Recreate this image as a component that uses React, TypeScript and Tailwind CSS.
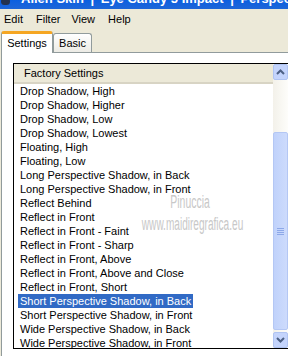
import React from 'react';

// --- Data ---
const presets = [
  'Drop Shadow, High',
  'Drop Shadow, Higher',
  'Drop Shadow, Low',
  'Drop Shadow, Lowest',
  'Floating, High',
  'Floating, Low',
  'Long Perspective Shadow, in Back',
  'Long Perspective Shadow, in Front',
  'Reflect Behind',
  'Reflect in Front',
  'Reflect in Front - Faint',
  'Reflect in Front - Sharp',
  'Reflect in Front, Above',
  'Reflect in Front, Above and Close',
  'Reflect in Front, Short',
  'Short Perspective Shadow, in Back',
  'Short Perspective Shadow, in Front',
  'Wide Perspective Shadow, in Back',
  'Wide Perspective Shadow, in Front',
];
const selected = 'Short Perspective Shadow, in Back';

// --- Icons ---
const ChevronUp: React.FC = () => (
  <svg width="9" height="6" viewBox="0 0 9 6"><path d="M1 5L4.5 1.5L8 5" fill="none" stroke="#4d6185" strokeWidth="2" /></svg>
);
const ChevronDown: React.FC = () => (
  <svg width="9" height="6" viewBox="0 0 9 6"><path d="M1 1L4.5 4.5L8 1" fill="none" stroke="#4d6185" strokeWidth="2" /></svg>
);

// --- Parts ---
const TitleBar: React.FC = () => (
  <div className="h-[9px] bg-gradient-to-b from-[#0a5fe0] to-[#1d66d8] overflow-hidden relative shrink-0">
    <div className="absolute top-[-2px] left-[1px] w-[9px] h-[7px] bg-[#23324f] rounded-sm" />
    <div className="absolute top-[-9px] left-[21px] whitespace-nowrap text-white font-bold text-[13px] leading-[16px]">
      Alien Skin <span className="mx-[3px]">|</span> Eye Candy 5 Impact <span className="mx-[3px]">|</span> Perspective Shadow
    </div>
  </div>
);

const MenuBar: React.FC = () => (
  <div className="h-[20px] flex items-center text-[11px] text-black shrink-0">
    <span className="ml-[4px]">Edit</span>
    <span className="ml-[13px]">Filter</span>
    <span className="ml-[11px]">View</span>
    <span className="ml-[13px]">Help</span>
  </div>
);

const Tabs: React.FC = () => (
  <div className="h-[23px] flex items-end pl-[1px] shrink-0 relative z-10">
    <div className="h-[22px] w-[52px] bg-white border-x border-[#919b9c] border-t-[3px] border-t-[#f5a623] rounded-t-[3px] flex items-center justify-center text-[11px] -mb-[1px] pb-[1px]">
      Settings
    </div>
    <div className="h-[19px] w-[39px] bg-gradient-to-b from-white to-[#ecebe5] border border-b-0 border-[#919b9c] rounded-t-[3px] flex items-center justify-center text-[11px]">
      Basic
    </div>
  </div>
);

const Scrollbar: React.FC = () => (
  <div className="w-[15px] h-full flex flex-col bg-gradient-to-r from-[#f3f1ea] to-[#fdfdfa] shrink-0">
    <div className="h-[16px] bg-[#c4d4fc] border border-[#b0c4f2] rounded-[2px] flex items-center justify-center">
      <ChevronUp />
    </div>
    <div className="h-[52px]" />
    <div className="h-[198px] bg-gradient-to-r from-[#c0d2fb] to-[#cddbfc] border border-[#b4c7f4] rounded-[2px] flex flex-col items-center justify-center gap-[1px]">
      <div className="w-[7px] h-[1px] bg-[#8da8e8]" />
      <div className="w-[7px] h-[1px] bg-[#8da8e8]" />
      <div className="w-[7px] h-[1px] bg-[#8da8e8]" />
      <div className="w-[7px] h-[1px] bg-[#8da8e8]" />
    </div>
    <div className="flex-1" />
    <div className="h-[16px] bg-[#c4d4fc] border border-[#b0c4f2] rounded-[2px] flex items-center justify-center">
      <ChevronDown />
    </div>
  </div>
);

const PresetList: React.FC = () => (
  <div className="w-[276px] h-[286px] border border-black flex overflow-hidden">
    <div className="flex-1 flex flex-col overflow-hidden">
      <div className="h-[20px] bg-[#ece9d8] border-b-2 border-[#d8d4c4] flex items-center pl-[10px] text-[11px] shrink-0">
        Factory Settings
      </div>
      <div className="flex flex-col">
        {presets.map(p => (
          <div key={p} className="h-[14px] shrink-0 pl-[4px] flex items-center text-[11px] leading-[14px] whitespace-nowrap">
            <span className={p === selected ? 'bg-[#316ac5] text-white px-[2px]' : 'px-[2px]'}>{p}</span>
          </div>
        ))}
      </div>
    </div>
    <Scrollbar />
  </div>
);

export default function App() {
  return (
    <div className="w-[288px] h-[356px] overflow-hidden bg-[#ece9d8] flex flex-col relative text-black" style={{ fontFamily: '"Liberation Sans", Arial, sans-serif' }}>
      <TitleBar />
      <MenuBar />
      <Tabs />
      <div className="flex-1 ml-[1px] bg-white border-l border-t border-[#919b9c] pt-[10px] pl-[11px]">
        <PresetList />
      </div>
      {/* watermark over the list */}
      <div className="absolute left-[143px] top-[193px] w-[100px] flex flex-col items-center text-[#c8c8c8] pointer-events-none leading-none">
        <div className="text-[18px] scale-x-[0.58] ml-[-6px]">Pinuccia</div>
        <div className="text-[18px] mt-[4px] scale-x-[0.56] whitespace-nowrap">www.maidiregrafica.eu</div>
      </div>
    </div>
  );
}
